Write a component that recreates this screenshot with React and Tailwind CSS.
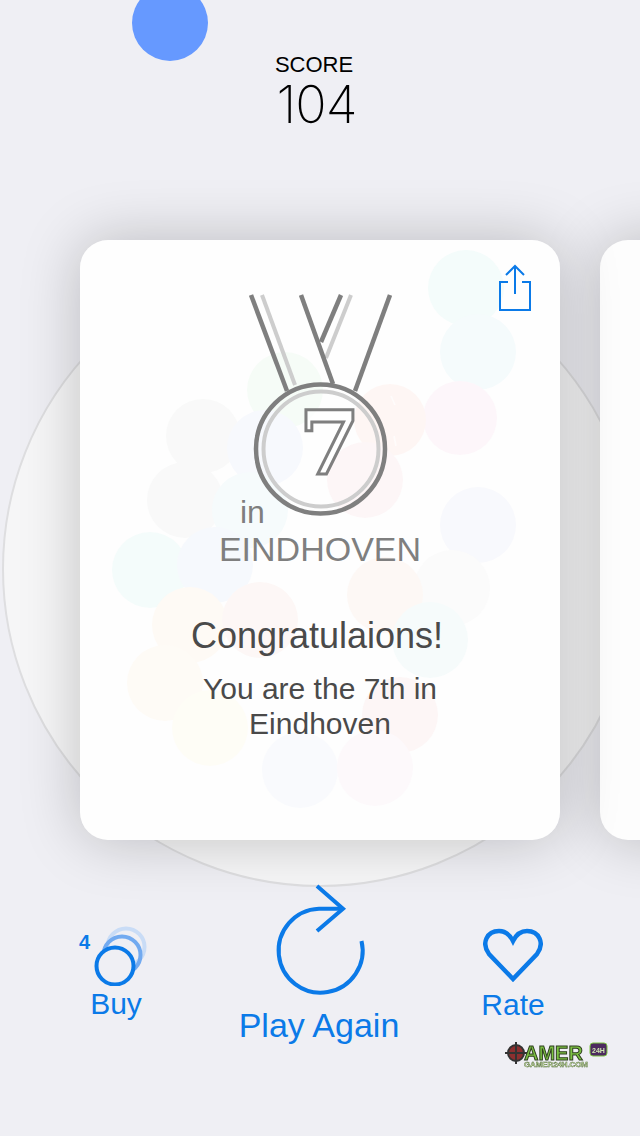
const bubbles = [
  { x: 386, y: 48, r: 38, c: "bg-[#effbf9]" },
  { x: 398, y: 112, r: 38, c: "bg-[#f1f9fb]" },
  { x: 380, y: 178, r: 37, c: "bg-[#fdf3f8]" },
  { x: 310, y: 180, r: 36, c: "bg-[#fef3f0]" },
  { x: 205, y: 150, r: 38, c: "bg-[#f3fbf4]" },
  { x: 123, y: 196, r: 37, c: "bg-[#f6f7f6]" },
  { x: 185, y: 208, r: 38, c: "bg-[#f4f6fd]" },
  { x: 398, y: 285, r: 38, c: "bg-[#f5f6fc]" },
  { x: 105, y: 260, r: 38, c: "bg-[#f6f7f7]" },
  { x: 170, y: 270, r: 38, c: "bg-[#f2f9fb]" },
  { x: 285, y: 240, r: 38, c: "bg-[#fdf3f4]" },
  { x: 70, y: 330, r: 38, c: "bg-[#f0fbf9]" },
  { x: 135, y: 325, r: 38, c: "bg-[#f3f6fc]" },
  { x: 372, y: 348, r: 38, c: "bg-[#f9f9f9]" },
  { x: 110, y: 385, r: 38, c: "bg-[#fef8f1]" },
  { x: 180, y: 380, r: 38, c: "bg-[#fdf4f2]" },
  { x: 305, y: 355, r: 38, c: "bg-[#fdf5f1]" },
  { x: 350, y: 400, r: 38, c: "bg-[#f2fafa]" },
  { x: 85, y: 443, r: 38, c: "bg-[#fef9f2]" },
  { x: 130, y: 488, r: 38, c: "bg-[#fefcf3]" },
  { x: 320, y: 475, r: 38, c: "bg-[#fdf3f3]" },
  { x: 220, y: 530, r: 38, c: "bg-[#f6f8fd]" },
  { x: 295, y: 528, r: 38, c: "bg-[#fdf6fa]" },
];

function Medal() {
  return (
    <svg viewBox="240 285 160 240" className="h-[240px] w-[160px]" fill="none">
      <g stroke="#cdcdcd" strokeWidth="4">
        <path d="M262 295 L295 385" />
        <path d="M351 295 L326 358" />
        <circle cx="321" cy="449" r="57.5" />
      </g>
      <g stroke="#7f7f7f" strokeWidth="4.5">
        <path d="M251 295 L287 391" />
        <path d="M341 295 L321 342" />
        <path d="M301 295 L333 384" />
        <path d="M390 295 L355 391" />
        <circle cx="320.5" cy="449" r="64.5" />
      </g>
      <g stroke="#ffffff" strokeWidth="1.5" opacity="0.7">
        <path d="M391 396 L395 405" />
        <path d="M410 398 L404 408" />
        <path d="M422 418 L409 423" />
        <path d="M414 440 L405 433" />
        <path d="M396 446 L394 436" />
      </g>
    </svg>
  );
}

function ShareIcon() {
  return (
    <svg viewBox="0 0 34 50" className="h-[50px] w-[34px]" fill="none" stroke="#0b7ae8" strokeWidth="2">
      <path d="M10 18 H2 V46 H32 V18 H24" />
      <path d="M17 2 V30" />
      <path d="M8 11 L17 2 L26 11" />
    </svg>
  );
}

function BuyIcon() {
  return (
    <svg viewBox="0 0 80 66" className="h-[66px] w-[80px]" fill="none" strokeWidth="4">
      <circle cx="50" cy="27" r="18.5" stroke="#c9dcf6" />
      <circle cx="46" cy="35" r="18.5" stroke="#72aaf0" />
      <circle cx="39" cy="46" r="18.5" stroke="#0b7ae8" fill="#efeff4" />
    </svg>
  );
}

function ReplayIcon() {
  return (
    <svg viewBox="269 880 100 120" className="h-[120px] w-[100px]" fill="none" stroke="#0b7ae8" strokeWidth="4">
      <path d="M361.5 941 A42 42 0 1 1 319 908.7 L343 908.7" />
      <path d="M317 886 L343 908.7 L317 931" />
    </svg>
  );
}

function HeartIcon() {
  return (
    <svg viewBox="0 0 60 54" className="h-[54px] w-[60px]" fill="none" stroke="#0b7ae8" strokeWidth="4.5">
      <path d="M30 51 L6 26 C-2 15 4 3 16 3 C23 3 27 7 30 13 C33 7 37 3 44 3 C56 3 62 15 54 26 Z" />
    </svg>
  );
}

function Watermark() {
  return (
    <svg viewBox="0 0 104 32" className="absolute left-[505px] top-[1040px] h-[32px] w-[104px] blur-[0.4px]">
      <circle cx="11" cy="13" r="8" fill="#8c2f2f" stroke="#333333" strokeWidth="2" />
      <path d="M11 2 V24 M0 13 H22" stroke="#333333" strokeWidth="2" />
      <text x="19" y="20" fontSize="20" fontWeight="700" fontFamily="Liberation Sans, sans-serif" fill="#7cc242" stroke="#2f3f1f" strokeWidth="1">
        AMER
      </text>
      <rect x="85" y="3" width="17" height="13" rx="3" fill="#4d2a5e" stroke="#7cc242" />
      <text x="87" y="13" fontSize="7" fontWeight="700" fontFamily="Liberation Sans, sans-serif" fill="#cfe8b0">
        24H
      </text>
      <text x="19" y="27" fontSize="8" fontWeight="700" fontFamily="Liberation Sans, sans-serif" fill="#d8edb8" stroke="#3f5a25" strokeWidth="0.4" textLength="64">
        GAMER24H.COM
      </text>
    </svg>
  );
}

export default function App() {
  return (
    <div className="relative h-[1136px] w-[640px] overflow-hidden bg-[#efeff4] font-['Liberation_Sans',sans-serif]">
      {/* plate behind the cards */}
      <div className="absolute left-[2px] top-[251px] h-[636px] w-[636px] rounded-full border-2 border-[#dedee0] bg-[#f6f6f7]" />
      {/* falling ball */}
      <div className="absolute left-[132px] top-[-15px] h-[76px] w-[76px] rounded-full bg-[#6699ff]" />

      <header className="relative flex h-[240px] flex-col items-center pt-[52px] pr-[12px] text-black">
        <div className="text-[22px] leading-[26px]">SCORE</div>
        <div className="ml-[5px] font-['Inter',sans-serif] text-[52px] font-extralight leading-[54px] tracking-[-1px]">104</div>
      </header>

      <div className="relative flex gap-10 pl-[80px]">
        <section className="relative flex h-[600px] w-[480px] shrink-0 flex-col rounded-[28px] bg-[#fefefe] pt-[45px] shadow-[0_0_60px_rgba(0,0,0,0.22)]">
          {bubbles.map((b, i) => (
            <div
              key={i}
              className={`absolute rounded-full ${b.c}`}
              style={{ left: b.x - b.r, top: b.y - b.r, width: b.r * 2, height: b.r * 2 }}
            />
          ))}
          <div className="absolute inset-0 rounded-[28px] bg-white/30" />
          <div className="absolute right-[28px] top-[24px]">
            <ShareIcon />
          </div>

          <div className="relative flex flex-col">
            <div className="relative mx-auto">
              <Medal />
              <div className="absolute left-[59px] top-[108px] font-['DejaVu_Serif',serif] text-[88px] font-bold leading-[100px] text-white/70 [-webkit-text-stroke:3px_#7f7f7f]">
                7
              </div>
            </div>
            <div className="-mt-[31px] ml-[160px] text-[32px] leading-[36px] text-[#7f7f7f]">in</div>
            <div className="text-center text-[34px] leading-[38px] text-[#7f7f7f]">EINDHOVEN</div>
            <div className="mt-[48px] pr-[6px] text-center text-[36px] leading-[40px] text-[#4a4a4a]">Congratulaions!</div>
            <div className="mt-[15px] text-center text-[30px] leading-[35px] text-[#4a4a4a]">
              You are the 7th in
              <br />
              Eindhoven
            </div>
          </div>
        </section>
        <section className="h-[600px] w-[480px] shrink-0 rounded-[28px] bg-[#fdfdfd] shadow-[0_0_60px_rgba(0,0,0,0.22)]" />
      </div>

      {/* bottom actions */}
      <div className="relative mt-[40px] flex items-start text-[#0b7ae8]">
        <div className="relative ml-[56px] flex w-[120px] flex-col items-center pt-[40px]">
          <BuyIcon />
          <div className="text-[30px] leading-[36px]">Buy</div>
          <div className="absolute left-[23px] top-[50px] text-[20px] font-bold leading-[24px]">4</div>
        </div>
        <div className="ml-[43px] flex w-[200px] flex-col items-center">
          <ReplayIcon />
          <div className="text-[34px] leading-[50px]">Play Again</div>
        </div>
        <div className="ml-[34px] flex w-[120px] flex-col items-center pt-[48px]">
          <HeartIcon />
          <div className="mt-[5px] text-[30px] leading-[36px]">Rate</div>
        </div>
      </div>

      <Watermark />
    </div>
  );
}
